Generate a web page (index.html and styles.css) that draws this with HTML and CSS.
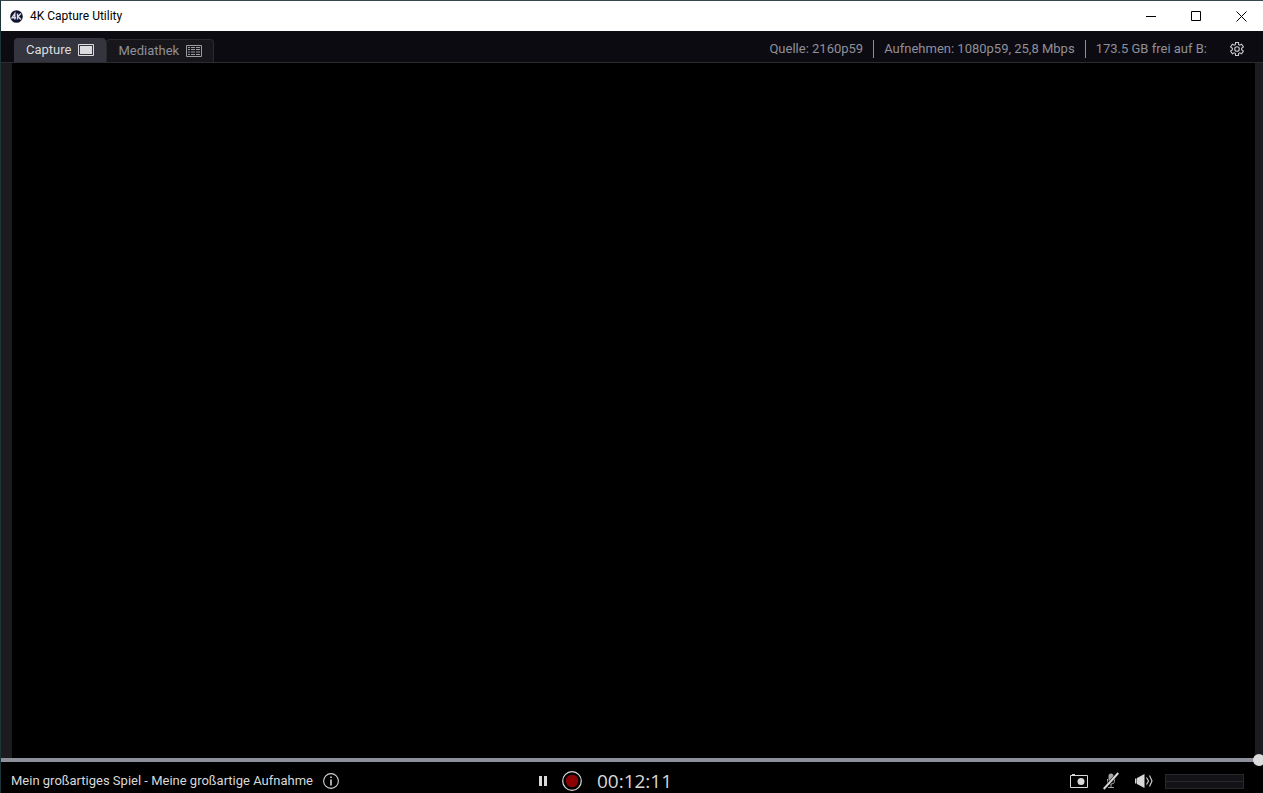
FILE: index.html
```html
<!DOCTYPE html>
<html lang="de">
<head>
    <meta charset="utf-8">
    <title>4K Capture Utility</title>
    <link rel="stylesheet" href="styles.css">
</head>
<body>
    <div class="window">
        <header class="titlebar">
            <svg class="logo" width="13" height="13" viewBox="0 0 13 13">
                <circle cx="6.5" cy="6.5" r="6.3" fill="#10142f"/>
                <path d="M4.800 9.500V3.500L2 7.800H6M7.500 3.500V9.500M11 3.500L8 6.500L11 9.500" fill="none" stroke="#d8d9e2" stroke-width="1.400"/>
            </svg>
            <h1 class="title">4K Capture Utility</h1>
            <div class="window-buttons">
                <button type="button" class="window-button" aria-label="Minimieren">
                    <svg width="11" height="11"><path d="M0 5.5H10" stroke="#000"/></svg>
                </button>
                <button type="button" class="window-button" aria-label="Maximieren">
                    <svg width="11" height="11"><path d="M.5 .5H9.500V9.500H.5Z" fill="none" stroke="#000"/></svg>
                </button>
                <button type="button" class="window-button" aria-label="Schließen">
                    <svg width="11" height="11"><path d="M.5 .5L10.500 10.500M10.500 .5L.5 10.500" stroke="#000"/></svg>
                </button>
            </div>
        </header>

        <div class="toolbar">
            <nav class="tabs">
                <button type="button" class="tab active">Capture
                    <svg width="16" height="12"><path d="M.5 .5H15.500V11.500H.5Z" fill="none" stroke="#dcdcde"/><path d="M2 2H14V10H2Z" fill="#dcdcde"/></svg>
                </button>
                <button type="button" class="tab">Mediathek
                    <svg width="16" height="12"><path d="M.5 .5H15.500V11.500H.5Z" fill="none" stroke="#9b9ca2"/><path d="M2 2.500H4M5 2.500H9M10 2.500H14M2 4.500H4M5 4.500H9M10 4.500H14M2 7H4M5 7H9M10 7H14M2 9.500H4M5 9.500H9M10 9.500H14" stroke="#9b9ca2"/></svg>
                </button>
            </nav>
            <div class="status">
                <span class="status-item">Quelle: 2160p59</span>
                <span class="status-item">Aufnehmen: 1080p59, 25,8 Mbps</span>
                <span class="status-item">173.5 GB frei auf B:</span>
            </div>
            <button type="button" class="icon-button" aria-label="Einstellungen">
                <svg width="16" height="16" viewBox="0 0 16 16" fill="none" stroke="#c8c8cb" stroke-width="1.100">
                    <path d="M6.500 1.500H9.500V3.500L10.700 4.200L12.600 3.200L14.400 5.900L12.600 7.200V8.800L14.400 10.100L12.600 12.800L10.700 11.800L9.500 12.500V14.500H6.500V12.500L5.300 11.800L3.400 12.800L1.600 10.100L3.400 8.800V7.200L1.600 5.900L3.400 3.200L5.300 4.200L6.500 3.500Z"/>
                    <circle cx="8" cy="8" r="2.300"/>
                </svg>
            </button>
        </div>

        <main class="video"></main>

        <div class="seek">
            <input type="range" class="seek-slider" min="0" max="731" value="731" aria-label="Position">
        </div>

        <footer class="controls">
            <div class="recording">
                <span>Mein großartiges Spiel - Meine großartige Aufnahme</span>
                <button type="button" class="icon-button" aria-label="Info">
                    <svg width="16" height="16" fill="none" stroke="#d4d4d4">
                        <circle cx="8" cy="8" r="7.400" stroke-width="1.100"/>
                        <path d="M8 3.500V5M8 6.500V12.500" stroke-width="1.600"/>
                    </svg>
                </button>
            </div>
            <div class="transport">
                <button type="button" class="icon-button" aria-label="Pause">
                    <svg width="8" height="10"><path d="M0 0H3V10H0ZM5 0H8V10H5Z" fill="#d8d8d8"/></svg>
                </button>
                <button type="button" class="icon-button" aria-label="Aufnahme">
                    <svg width="20" height="20"><circle cx="10" cy="10" r="9.300" fill="none" stroke="#d8d8d8" stroke-width="1.200"/><circle cx="10" cy="10" r="6.200" fill="#8b0000"/></svg>
                </button>
                <span class="time">00:12:11</span>
            </div>
            <div class="output">
                <div class="output-buttons">
                    <button type="button" class="icon-button" aria-label="Screenshot">
                        <svg width="18" height="14"><path d="M.5 1.500H17.500V13.500H.5Z" fill="none" stroke="#d8d8d8"/><path d="M2 0H5V2H2Z" fill="#d8d8d8"/><circle cx="11" cy="7.500" r="3.500" fill="#d8d8d8"/></svg>
                    </button>
                    <button type="button" class="icon-button" aria-label="Mikrofon">
                        <svg width="16" height="18" fill="none" stroke="#a4a4a6">
                            <path d="M8 4V7.500" stroke-width="5" stroke-linecap="round"/>
                            <path d="M4.500 7V9.500Q4.500 12 8 12T11.500 9.500V7M8 12V16M5 15.500H11"/>
                            <path d="M.7 17L15.300 1" stroke="#000" stroke-width="3"/>
                            <path d="M.7 17L15.300 1" stroke="#d8d8d8" stroke-width="2"/>
                        </svg>
                    </button>
                    <button type="button" class="icon-button" aria-label="Lautstärke">
                        <svg width="19" height="16"><path d="M1 5.500H2.500V10.500H1ZM3 5L10.500 1V15L3 11Z" fill="#d8d8d8"/><path d="M12.500 4.500L14.500 8L12.500 11.500M15.500 2.500L18 8L15.500 13.500" fill="none" stroke="#c8c8c8" stroke-width="1.200"/></svg>
                    </button>
                </div>
                <div class="levels">
                    <div class="level"></div>
                    <div class="level"></div>
                </div>
            </div>
        </footer>
    </div>
</body>
</html>
```
FILE: styles.css
```css
* {
    box-sizing: border-box;
}

body {
    margin: 0;
    background-color: #000;
    color: #d8d8d8;
    font-family: Roboto, "Open Sans", sans-serif;
    font-size: 13px;
    line-height: 18px;
}

button {
    margin: 0;
    padding: 0;
    border: none;
    background: none;
    color: inherit;
    font: inherit;
}

svg {
    display: block;
    flex-shrink: 0;
}

.window {
    display: flex;
    flex-direction: column;
    height: 100vh;
    border-top: 1px solid #38494d;
    border-left: 1px solid #1c3338;
    overflow: hidden;
}

/* Title bar */
.titlebar {
    display: flex;
    align-items: center;
    height: 30px;
    padding-left: 9px;
    gap: 7px;
    background-color: #fff;
    color: #000;
}

.title {
    flex: 1;
    margin: 0;
    font-size: 12px;
    font-weight: normal;
}

.window-buttons {
    display: flex;
}

.window-button {
    display: flex;
    align-items: center;
    justify-content: center;
    width: 45px;
    height: 30px;
    padding-left: 2px;
}

/* Tabs and status */
.toolbar {
    display: flex;
    align-items: center;
    height: 32px;
    padding: 4px 18px 0 13px;
    border-bottom: 1px solid #2b2b30;
    background-color: #0c0b12;
    color: #8f9099;
}

.tabs {
    display: flex;
    align-self: flex-end;
    align-items: flex-end;
}

.tab {
    display: flex;
    align-items: center;
    gap: 7px;
    height: 23px;
    padding: 0 11px 1px;
    border: 1px solid #29292e;
    border-bottom: none;
    border-radius: 4px 4px 0 0;
    background-color: #17171b;
}

.tab.active {
    height: 24px;
    padding-bottom: 2px;
    border-color: #35353f;
    background-color: #35353f;
    color: #dcdcde;
}

.status {
    display: flex;
    margin-left: auto;
    margin-right: 12px;
}

.status-item {
    padding: 0 10px;
}

.status-item + .status-item {
    border-left: 1px solid #8f9099;
}

.icon-button {
    display: flex;
}

/* Preview */
.video {
    flex: 1;
    border-left: 11px solid #1c1b20;
    border-right: 8px solid #1c1b20;
    background-color: #000;
}

.seek {
    display: flex;
    align-items: center;
    height: 4px;
    margin-right: -2px;
}

.seek-slider {
    flex: 1;
    height: 12px;
    margin: 0;
    background: none;
    -webkit-appearance: none;
    appearance: none;
}

.seek-slider::-webkit-slider-runnable-track {
    height: 4px;
    background-color: #8d909b;
}

.seek-slider::-webkit-slider-thumb {
    width: 12px;
    height: 12px;
    margin-top: -4px;
    border-radius: 50%;
    background-color: #dcdcdc;
    -webkit-appearance: none;
}

/* Bottom controls */
.controls {
    display: grid;
    grid-template-columns: 12fr auto 13fr;
    align-items: center;
    height: 31px;
    padding: 7px 19px 0 10px;
}

.recording,
.transport,
.output,
.output-buttons {
    display: flex;
    align-items: center;
}

.recording {
    gap: 10px;
}

.transport {
    gap: 15px;
}

.time {
    font-family: "Open Sans", sans-serif;
    font-size: 19px;
}

.output {
    justify-content: flex-end;
    gap: 12px;
}

.output-buttons {
    gap: 15px;
}

.levels {
    width: 79px;
    border: 1px solid #29292d;
    background-color: #131317;
}

.level {
    height: 6px;
}

.level + .level {
    height: 7px;
    border-top: 1px solid #29292d;
}
```
